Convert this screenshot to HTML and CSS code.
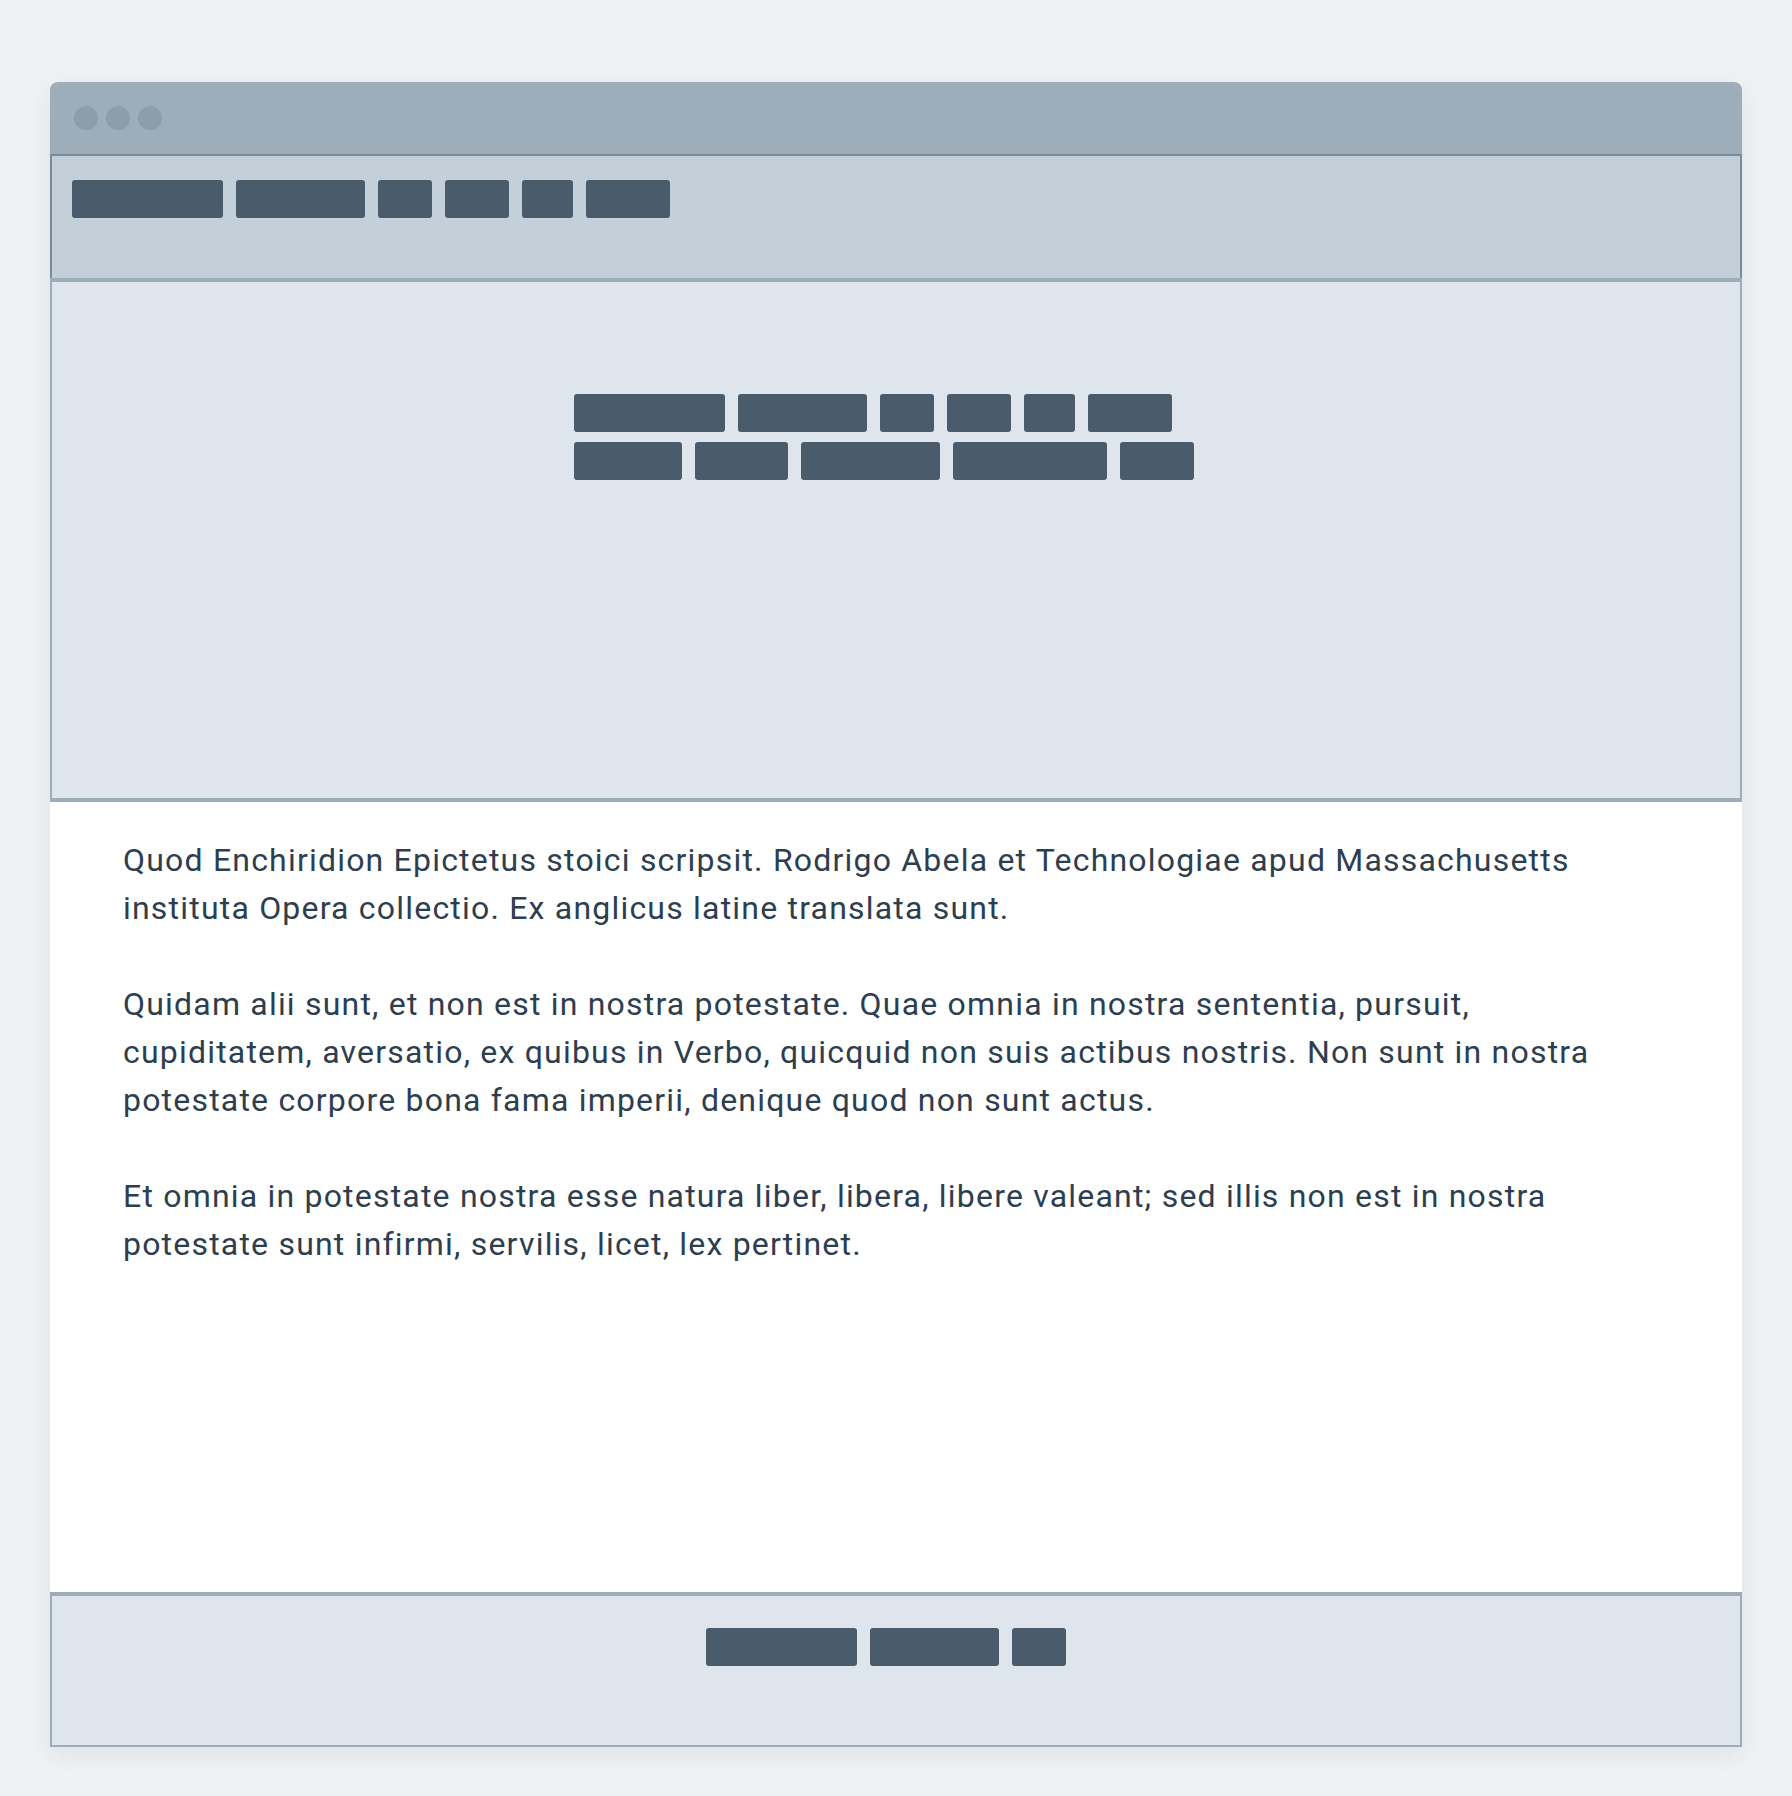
FILE: index.html
```html
<!DOCTYPE html>
<html lang="la">
<head>
<meta charset="utf-8">
<title>Wireframe</title>
<link rel="stylesheet" href="styles.css">
</head>
<body>
<div class="window">
  <div class="titlebar">
    <span class="dot"></span><span class="dot"></span><span class="dot"></span>
  </div>
  <header class="header">
    <nav class="words">
      <span class="w" style="width:151px"></span>
      <span class="w" style="width:129px"></span>
      <span class="w" style="width:54px"></span>
      <span class="w" style="width:64px"></span>
      <span class="w" style="width:51px"></span>
      <span class="w" style="width:84px"></span>
    </nav>
  </header>
  <section class="hero">
    <div class="hero-inner">
      <div class="words wrap">
        <span class="w" style="width:151px"></span>
        <span class="w" style="width:129px"></span>
        <span class="w" style="width:54px"></span>
        <span class="w" style="width:64px"></span>
        <span class="w" style="width:51px"></span>
        <span class="w" style="width:84px"></span>
        <span class="w" style="width:108px"></span>
        <span class="w" style="width:93px"></span>
        <span class="w" style="width:139px"></span>
        <span class="w" style="width:154px"></span>
        <span class="w" style="width:74px"></span>
      </div>
    </div>
  </section>
  <main class="content">
    <p>Quod Enchiridion Epictetus stoici scripsit. Rodrigo Abela et Technologiae apud Massachusetts instituta Opera collectio. Ex anglicus latine translata sunt.</p>
    <p>Quidam alii sunt, et non est in nostra potestate. Quae omnia in nostra sententia, pursuit, cupiditatem, aversatio, ex quibus in Verbo, quicquid non suis actibus nostris. Non sunt in nostra potestate corpore bona fama imperii, denique quod non sunt actus.</p>
    <p>Et omnia in potestate nostra esse natura liber, libera, libere valeant; sed illis non est in nostra potestate sunt infirmi, servilis, licet, lex pertinet.</p>
  </main>
  <footer class="footer">
    <div class="words center">
      <span class="w" style="width:151px"></span>
      <span class="w" style="width:129px"></span>
      <span class="w" style="width:54px"></span>
    </div>
  </footer>
</div>
</body>
</html>
```

FILE: styles.css
```css
* { box-sizing: border-box; }
html, body { margin: 0; padding: 0; }
body {
  background: #eef2f5;
  font-family: Roboto, "Liberation Sans", sans-serif;
  padding: 82px 50px 49px 50px;
}
.window {
  width: 1692px;
  background: #ffffff;
  border-radius: 8px 8px 0 0;
  box-shadow: 0 8px 24px rgba(30, 50, 70, 0.08);
}
.titlebar {
  height: 72px;
  background: #9eadba;
  border-radius: 8px 8px 0 0;
  display: flex;
  align-items: center;
  gap: 8px;
  padding-left: 24px;
}
.dot {
  width: 24px;
  height: 24px;
  border-radius: 50%;
  background: #8d9dac;
}
.header {
  height: 124px;
  background: #c3cfd9;
  border: 2px solid #7b8b9a;
  border-bottom: none;
  padding: 24px 20px 0 20px;
}
.words {
  display: flex;
  gap: 13px;
}
.words.wrap {
  flex-wrap: wrap;
  row-gap: 10px;
}
.words.center {
  justify-content: center;
}
.w {
  display: block;
  height: 38px;
  background: #4a5b6b;
  border-radius: 3px;
}
.hero {
  height: 524px;
  background: #dfe5ed;
  border: 2px solid #9eadba;
  border-top-width: 4px;
  border-bottom-width: 4px;
  padding: 112px 20px 0 20px;
}
.hero-inner {
  width: 644px;
  margin: 0 auto;
}
.content {
  height: 790px;
  padding: 34px 119px 0 73px;
  color: #2d3e4f;
  font-size: 32px;
  line-height: 48px;
  letter-spacing: 1.2px;
}
.content p {
  margin: 0 0 48px 0;
}
.footer {
  height: 155px;
  background: #dfe5ed;
  border: 2px solid #9eadba;
  border-top-width: 4px;
  padding: 32px 40px 0 20px;
}
```
